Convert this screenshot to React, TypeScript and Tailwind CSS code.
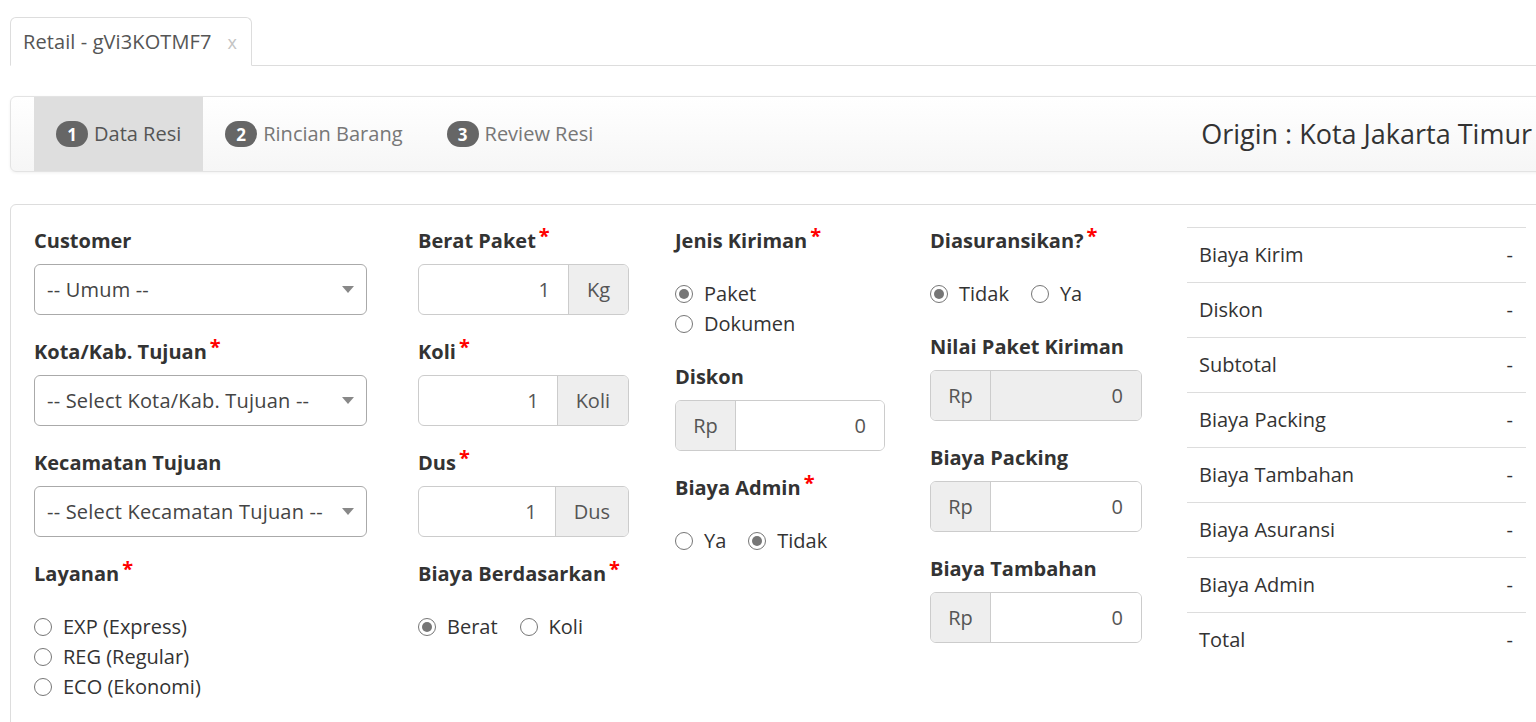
import React from "react";

const FONT = { fontFamily: '"Open Sans", "Noto Sans", sans-serif' };

function Star() {
  return <span className="text-[#ff0000] relative -top-[5px] ml-[3px] font-bold">*</span>;
}

function Label({ text, req }: { text: string; req?: boolean }) {
  return (
    <div className="h-[30px] leading-[30px] font-bold text-[#333] whitespace-nowrap">
      {text}
      {req && <Star />}
    </div>
  );
}

function Radio({ checked, label }: { checked?: boolean; label: string }) {
  return (
    <span className="inline-flex items-center h-[30px] whitespace-nowrap">
      <span className="w-[18px] h-[18px] rounded-full border-[1.5px] border-[#767676] bg-white flex items-center justify-center">
        {checked && <span className="w-[10px] h-[10px] rounded-full bg-[#767676]" />}
      </span>
      <span className="ml-[11px] text-[#333]">{label}</span>
    </span>
  );
}

function Select({ text }: { text: string }) {
  return (
    <div className="h-[51px] border border-[#aaa] rounded-[6px] bg-white flex items-center pl-[12px] pr-[12px]">
      <span className="flex-1 text-[#444] whitespace-nowrap overflow-hidden tracking-[0.2px]">{text}</span>
      <svg width="12" height="7" viewBox="0 0 12 7" className="ml-[8px] shrink-0">
        <path d="M0 0 L12 0 L6 7 Z" fill="#888" />
      </svg>
    </div>
  );
}

function InputAddonRight({ value, addon }: { value: string; addon: string }) {
  return (
    <div className="h-[51px] flex border border-[#ccc] rounded-[6px] overflow-hidden bg-white">
      <div className="flex-1 flex items-center justify-end pr-[18px] text-[#555]">{value}</div>
      <div className="px-[18px] bg-[#eee] border-l border-[#ccc] flex items-center text-[#555]">{addon}</div>
    </div>
  );
}

function InputAddonLeft({ value, disabled }: { value: string; disabled?: boolean }) {
  return (
    <div className="h-[51px] flex border border-[#ccc] rounded-[6px] overflow-hidden bg-white">
      <div className="w-[60px] shrink-0 bg-[#eee] border-r border-[#ccc] flex items-center justify-center text-[#555]">Rp</div>
      <div className={`flex-1 flex items-center justify-end pr-[18px] text-[#555] ${disabled ? "bg-[#eee]" : "bg-white"}`}>{value}</div>
    </div>
  );
}

function Field({ label, req, children }: { label: string; req?: boolean; children: React.ReactNode }) {
  return (
    <div className="mb-[22px]">
      <Label text={label} req={req} />
      <div className="mt-[8px]">{children}</div>
    </div>
  );
}

function RadioGroup({ label, req, children, vertical }: { label: string; req?: boolean; children: React.ReactNode; vertical?: boolean }) {
  return (
    <div className="mb-[23px]">
      <Label text={label} req={req} />
      <div className={`mt-[23px] ${vertical ? "flex flex-col" : "flex gap-[22px]"}`}>{children}</div>
    </div>
  );
}

function Badge({ n }: { n: number }) {
  return (
    <span className="inline-flex items-center justify-center w-[32px] h-[26px] rounded-full bg-[#666] text-white font-bold text-[17px] leading-none">
      {n}
    </span>
  );
}

const rows = [
  "Biaya Kirim",
  "Diskon",
  "Subtotal",
  "Biaya Packing",
  "Biaya Tambahan",
  "Biaya Asuransi",
  "Biaya Admin",
  "Total",
];

export default function App() {
  return (
    <div className="w-[1536px] h-[722px] overflow-hidden bg-white text-[20px] leading-[30px] text-[#333]" style={FONT}>
      <div className="w-[1600px] pl-[10px]">
        {/* Tabs */}
        <div className="pt-[17px] flex border-b border-[#ddd]">
          <div className="h-[49px] -mb-[1px] border border-[#ddd] border-b-white bg-white rounded-t-[6px] flex items-center pl-[12px] pr-[14px]">
            <span className="text-[#555] tracking-[0.1px]">Retail - gVi3KOTMF7</span>
            <span className="ml-[16px] text-[#c4c4c4] text-[18px]">x</span>
          </div>
        </div>

        {/* Steps */}
        <div className="mt-[30px] w-[1570px] h-[76px] border border-[#e3e3e3] rounded-[6px] bg-gradient-to-b from-white to-[#f6f6f6] shadow-[0_1px_3px_rgba(0,0,0,0.06)] flex items-stretch pl-[23px] pr-[47px]">
          <div className="flex items-center px-[22px] bg-[#dedede]">
            <Badge n={1} />
            <span className="ml-[6px] text-[#555]">Data Resi</span>
          </div>
          <div className="flex items-center px-[22px]">
            <Badge n={2} />
            <span className="ml-[6px] text-[#777]">Rincian Barang</span>
          </div>
          <div className="flex items-center px-[22px]">
            <Badge n={3} />
            <span className="ml-[6px] text-[#777]">Review Resi</span>
          </div>
          <div className="flex-1" />
          <div className="flex items-center text-[27px] text-[#333]">Origin : Kota Jakarta Timur</div>
        </div>

        {/* Form panel */}
        <div className="mt-[32px] w-[1570px] h-[600px] border border-[#ddd] rounded-[6px] pt-[21px] pl-[23px] flex items-start">
          {/* Col 1 */}
          <div className="w-[333px]">
            <Field label="Customer">
              <Select text="-- Umum --" />
            </Field>
            <Field label="Kota/Kab. Tujuan" req>
              <Select text="-- Select Kota/Kab. Tujuan --" />
            </Field>
            <Field label="Kecamatan Tujuan">
              <Select text="-- Select Kecamatan Tujuan --" />
            </Field>
            <RadioGroup label="Layanan" req vertical>
              <Radio label="EXP (Express)" />
              <Radio label="REG (Regular)" />
              <Radio label="ECO (Ekonomi)" />
            </RadioGroup>
          </div>

          {/* Col 2 */}
          <div className="w-[211px] ml-[51px]">
            <Field label="Berat Paket" req>
              <InputAddonRight value="1" addon="Kg" />
            </Field>
            <Field label="Koli" req>
              <InputAddonRight value="1" addon="Koli" />
            </Field>
            <Field label="Dus" req>
              <InputAddonRight value="1" addon="Dus" />
            </Field>
            <RadioGroup label="Biaya Berdasarkan" req>
              <Radio label="Berat" checked />
              <Radio label="Koli" />
            </RadioGroup>
          </div>

          {/* Col 3 */}
          <div className="w-[210px] ml-[46px]">
            <RadioGroup label="Jenis Kiriman" req vertical>
              <Radio label="Paket" checked />
              <Radio label="Dokumen" />
            </RadioGroup>
            <Field label="Diskon">
              <InputAddonLeft value="0" />
            </Field>
            <RadioGroup label="Biaya Admin" req>
              <Radio label="Ya" />
              <Radio label="Tidak" checked />
            </RadioGroup>
          </div>

          {/* Col 4 */}
          <div className="w-[212px] ml-[45px]">
            <RadioGroup label="Diasuransikan?" req>
              <Radio label="Tidak" checked />
              <Radio label="Ya" />
            </RadioGroup>
            <Field label="Nilai Paket Kiriman">
              <InputAddonLeft value="0" disabled />
            </Field>
            <Field label="Biaya Packing">
              <InputAddonLeft value="0" />
            </Field>
            <Field label="Biaya Tambahan">
              <InputAddonLeft value="0" />
            </Field>
          </div>

          {/* Col 5 */}
          <div className="w-[339px] ml-[45px] mt-[1px]">
            {rows.map((r) => (
              <div key={r} className="h-[55px] border-t border-[#ddd] flex items-center justify-between px-[12px]">
                <span className="text-[#333]">{r}</span>
                <span className="text-[#333] pr-[1px]">-</span>
              </div>
            ))}
          </div>
        </div>
      </div>
    </div>
  );
}
